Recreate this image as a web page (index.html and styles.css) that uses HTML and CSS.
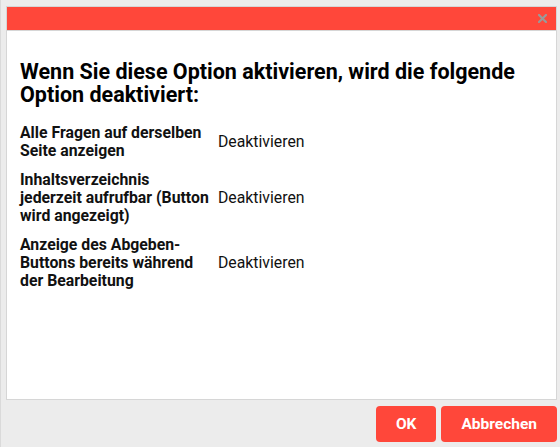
FILE: index.html
```html
<!DOCTYPE html>
<html lang="de">
<head>
    <meta charset="UTF-8">
    <meta name="viewport" content="width=device-width, initial-scale=1.0">
    <title>Option deaktivieren</title>
    <link rel="stylesheet" href="styles.css">
</head>
<body>
    <div class="dialog">
        <div class="titlebar">
            <span class="close" title="Schließen">
                <svg width="9" height="9" viewBox="0 0 9 9">
                    <path d="M1 1 L8 8 M8 1 L1 8" stroke="#9a9a9a" stroke-width="2.2" stroke-linecap="square"/>
                </svg>
            </span>
        </div>

        <div class="content">
            <h3>Wenn Sie diese Option aktivieren, wird die folgende Option deaktiviert:</h3>

            <div class="options">
                <div class="label">Alle Fragen auf derselben Seite anzeigen</div>
                <div class="value">Deaktivieren</div>

                <div class="label">Inhaltsverzeichnis jederzeit aufrufbar (Button wird angezeigt)</div>
                <div class="value">Deaktivieren</div>

                <div class="label">Anzeige des Abgeben-Buttons bereits während der Bearbeitung</div>
                <div class="value">Deaktivieren</div>
            </div>
        </div>

        <div class="buttonpane">
            <button class="btn">OK</button>
            <button class="btn">Abbrechen</button>
        </div>
    </div>
</body>
</html>
```

FILE: styles.css
```css
html, body {
    margin: 0;
    padding: 0;
    background-color: #ececec;
}
body {
    font-family: Roboto, "Liberation Sans", Arial, sans-serif;
    color: #111;
}
.dialog {
    height: 447px;
    box-sizing: border-box;
    border-left: 1px solid #dadada;
    padding: 6px 3px 0 5px;
}
.titlebar {
    height: 23px;
    background-color: #ff473a;
    border: 1px solid #d6d6d6;
    display: flex;
    justify-content: flex-end;
    align-items: center;
    padding-right: 9px;
}
.close {
    display: flex;
    cursor: pointer;
}
.content {
    height: 369px;
    background-color: white;
    border: 1px solid #d6d6d6;
    border-top: none;
    padding: 29px 13px 0 13px;
    box-sizing: border-box;
}
.content h3 {
    margin: 0 0 18px 0;
    font-size: 21.5px;
    line-height: 23px;
    font-weight: bold;
    color: #000;
}
.options {
    display: grid;
    grid-template-columns: 192px auto;
    column-gap: 6px;
    row-gap: 11px;
    align-items: center;
    font-size: 15.8px;
    line-height: 18px;
}
.label {
    font-weight: bold;
}
.value {
    color: #111;
}
.buttonpane {
    display: flex;
    justify-content: flex-end;
    gap: 5px;
    margin-top: 6px;
}
.btn {
    height: 36px;
    background-color: #ff473a;
    color: white;
    border: none;
    border-radius: 4px;
    font-family: Roboto, "Liberation Sans", Arial, sans-serif;
    font-size: 15.5px;
    font-weight: bold;
    cursor: pointer;
    padding: 0 20px;
}
```
